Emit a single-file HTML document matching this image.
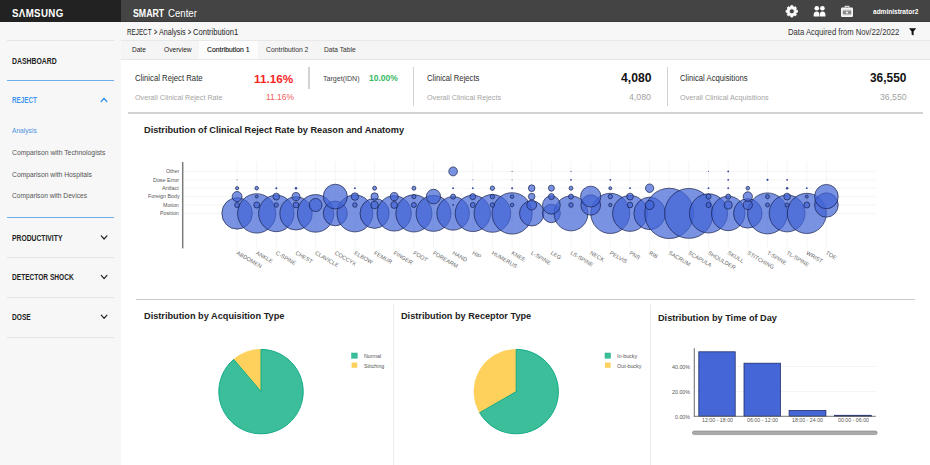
<!DOCTYPE html>
<html><head><meta charset="utf-8"><title>SMART Center</title>
<style>
*{box-sizing:border-box;margin:0;padding:0}
html,body{width:930px;height:465px;overflow:hidden;background:#fff;font-family:"Liberation Sans",sans-serif}
#w{position:relative;width:930px;height:465px;overflow:hidden;background:#fff}
.a{position:absolute}
.t{position:absolute;white-space:pre;line-height:1;transform-origin:0 50%}
svg{position:absolute;left:0;top:0}
svg text{font-family:"Liberation Sans",sans-serif}
</style></head>
<body><div id="w">

<div class="a" style="left:0;top:0;width:121px;height:22.4px;background:#222"></div>
<div class="a" style="left:121px;top:0;width:809px;height:22.4px;background:#444;border-bottom:1px solid #383838"></div>
<div class="a" style="left:0;top:22px;width:121px;height:443px;background:#f7f7f7"></div>
<div class="a" style="left:121px;top:22px;width:809px;height:19px;background:#f7f7f7;border-bottom:1px solid #e8e8e8"></div>
<div class="a" style="left:121px;top:41px;width:809px;height:18.8px;background:#f5f5f5;border-bottom:1px solid #e6e6e6"></div>
<div class="a" style="left:198.6px;top:41.4px;width:59.8px;height:17.4px;background:#fcfcfc"></div>
<div class="a" style="left:7.3px;top:40.2px;width:106.4px;height:1px;background:#e4e4e4"></div>
<div class="a" style="left:7.3px;top:79.9px;width:106.4px;height:1px;background:#6cadec"></div>
<div class="a" style="left:7.3px;top:217.4px;width:106.4px;height:1px;background:#6cadec"></div>
<div class="a" style="left:7.3px;top:257.2px;width:106.4px;height:1px;background:#e4e4e4"></div>
<div class="a" style="left:7.3px;top:297px;width:106.4px;height:1px;background:#e4e4e4"></div>
<div class="a" style="left:7.3px;top:336.5px;width:106.4px;height:1px;background:#e4e4e4"></div>
<div class="a" style="left:308.4px;top:67.4px;width:1.6px;height:21.6px;background:#d2d2d2"></div>
<div class="a" style="left:412.8px;top:67.4px;width:1.6px;height:38.2px;background:#d2d2d2"></div>
<div class="a" style="left:666.8px;top:67.4px;width:1.6px;height:38.2px;background:#d2d2d2"></div>
<div class="a" style="left:128.4px;top:112px;width:794.6px;height:1.7px;background:#d2d2d2"></div>
<div class="a" style="left:136px;top:299px;width:779px;height:1px;background:#cacaca"></div>
<div class="a" style="left:393.2px;top:303.7px;width:1px;height:162px;background:#ececec"></div>
<div class="a" style="left:650.1px;top:303.7px;width:1px;height:162px;background:#ececec"></div>

<svg width="930" height="465" viewBox="0 0 930 465">
<line x1="185" x2="875.6" y1="171.4" y2="171.4" stroke="#f1f1f1" stroke-width="0.7"/>
<line x1="185" x2="875.6" y1="179.8" y2="179.8" stroke="#f1f1f1" stroke-width="0.7"/>
<line x1="185" x2="875.6" y1="188.2" y2="188.2" stroke="#f1f1f1" stroke-width="0.7"/>
<line x1="185" x2="875.6" y1="196.6" y2="196.6" stroke="#f1f1f1" stroke-width="0.7"/>
<line x1="185" x2="875.6" y1="205.0" y2="205.0" stroke="#f1f1f1" stroke-width="0.7"/>
<line x1="185" x2="875.6" y1="213.4" y2="213.4" stroke="#f1f1f1" stroke-width="0.7"/>
<line x1="237.1" x2="237.1" y1="161.6" y2="248.4" stroke="#f1f1f1" stroke-width="0.7"/>
<line x1="256.7" x2="256.7" y1="161.6" y2="248.4" stroke="#f1f1f1" stroke-width="0.7"/>
<line x1="276.3" x2="276.3" y1="161.6" y2="248.4" stroke="#f1f1f1" stroke-width="0.7"/>
<line x1="296.0" x2="296.0" y1="161.6" y2="248.4" stroke="#f1f1f1" stroke-width="0.7"/>
<line x1="315.6" x2="315.6" y1="161.6" y2="248.4" stroke="#f1f1f1" stroke-width="0.7"/>
<line x1="335.3" x2="335.3" y1="161.6" y2="248.4" stroke="#f1f1f1" stroke-width="0.7"/>
<line x1="354.9" x2="354.9" y1="161.6" y2="248.4" stroke="#f1f1f1" stroke-width="0.7"/>
<line x1="374.6" x2="374.6" y1="161.6" y2="248.4" stroke="#f1f1f1" stroke-width="0.7"/>
<line x1="394.2" x2="394.2" y1="161.6" y2="248.4" stroke="#f1f1f1" stroke-width="0.7"/>
<line x1="413.9" x2="413.9" y1="161.6" y2="248.4" stroke="#f1f1f1" stroke-width="0.7"/>
<line x1="433.5" x2="433.5" y1="161.6" y2="248.4" stroke="#f1f1f1" stroke-width="0.7"/>
<line x1="453.1" x2="453.1" y1="161.6" y2="248.4" stroke="#f1f1f1" stroke-width="0.7"/>
<line x1="472.8" x2="472.8" y1="161.6" y2="248.4" stroke="#f1f1f1" stroke-width="0.7"/>
<line x1="492.4" x2="492.4" y1="161.6" y2="248.4" stroke="#f1f1f1" stroke-width="0.7"/>
<line x1="512.1" x2="512.1" y1="161.6" y2="248.4" stroke="#f1f1f1" stroke-width="0.7"/>
<line x1="531.7" x2="531.7" y1="161.6" y2="248.4" stroke="#f1f1f1" stroke-width="0.7"/>
<line x1="551.4" x2="551.4" y1="161.6" y2="248.4" stroke="#f1f1f1" stroke-width="0.7"/>
<line x1="571.0" x2="571.0" y1="161.6" y2="248.4" stroke="#f1f1f1" stroke-width="0.7"/>
<line x1="590.7" x2="590.7" y1="161.6" y2="248.4" stroke="#f1f1f1" stroke-width="0.7"/>
<line x1="610.3" x2="610.3" y1="161.6" y2="248.4" stroke="#f1f1f1" stroke-width="0.7"/>
<line x1="630.0" x2="630.0" y1="161.6" y2="248.4" stroke="#f1f1f1" stroke-width="0.7"/>
<line x1="649.6" x2="649.6" y1="161.6" y2="248.4" stroke="#f1f1f1" stroke-width="0.7"/>
<line x1="669.2" x2="669.2" y1="161.6" y2="248.4" stroke="#f1f1f1" stroke-width="0.7"/>
<line x1="688.9" x2="688.9" y1="161.6" y2="248.4" stroke="#f1f1f1" stroke-width="0.7"/>
<line x1="708.5" x2="708.5" y1="161.6" y2="248.4" stroke="#f1f1f1" stroke-width="0.7"/>
<line x1="728.2" x2="728.2" y1="161.6" y2="248.4" stroke="#f1f1f1" stroke-width="0.7"/>
<line x1="747.8" x2="747.8" y1="161.6" y2="248.4" stroke="#f1f1f1" stroke-width="0.7"/>
<line x1="767.5" x2="767.5" y1="161.6" y2="248.4" stroke="#f1f1f1" stroke-width="0.7"/>
<line x1="787.1" x2="787.1" y1="161.6" y2="248.4" stroke="#f1f1f1" stroke-width="0.7"/>
<line x1="806.8" x2="806.8" y1="161.6" y2="248.4" stroke="#f1f1f1" stroke-width="0.7"/>
<line x1="826.4" x2="826.4" y1="161.6" y2="248.4" stroke="#f1f1f1" stroke-width="0.7"/>
<line x1="182.7" x2="182.7" y1="162" y2="248.4" stroke="#7c7c7c" stroke-width="1.5"/>
<ellipse cx="237.1" cy="213.4" rx="15.27" ry="15.73" fill="rgba(66,100,214,0.70)" stroke="rgba(18,28,70,0.9)" stroke-width="0.75"/>
<ellipse cx="256.7" cy="213.4" rx="19.11" ry="19.69" fill="rgba(66,100,214,0.70)" stroke="rgba(18,28,70,0.9)" stroke-width="0.75"/>
<ellipse cx="276.3" cy="213.4" rx="17.73" ry="18.27" fill="rgba(66,100,214,0.70)" stroke="rgba(18,28,70,0.9)" stroke-width="0.75"/>
<ellipse cx="296.0" cy="213.4" rx="16.15" ry="16.65" fill="rgba(66,100,214,0.70)" stroke="rgba(18,28,70,0.9)" stroke-width="0.75"/>
<ellipse cx="315.6" cy="213.4" rx="18.22" ry="18.78" fill="rgba(66,100,214,0.70)" stroke="rgba(18,28,70,0.9)" stroke-width="0.75"/>
<ellipse cx="335.3" cy="213.4" rx="12.02" ry="12.38" fill="rgba(66,100,214,0.70)" stroke="rgba(18,28,70,0.9)" stroke-width="0.75"/>
<ellipse cx="354.9" cy="213.4" rx="17.93" ry="18.47" fill="rgba(66,100,214,0.70)" stroke="rgba(18,28,70,0.9)" stroke-width="0.75"/>
<ellipse cx="374.6" cy="213.4" rx="14.58" ry="15.02" fill="rgba(66,100,214,0.70)" stroke="rgba(18,28,70,0.9)" stroke-width="0.75"/>
<ellipse cx="394.2" cy="213.4" rx="17.14" ry="17.66" fill="rgba(66,100,214,0.70)" stroke="rgba(18,28,70,0.9)" stroke-width="0.75"/>
<ellipse cx="413.9" cy="213.4" rx="18.03" ry="18.57" fill="rgba(66,100,214,0.70)" stroke="rgba(18,28,70,0.9)" stroke-width="0.75"/>
<ellipse cx="433.5" cy="213.4" rx="17.43" ry="17.97" fill="rgba(66,100,214,0.70)" stroke="rgba(18,28,70,0.9)" stroke-width="0.75"/>
<ellipse cx="453.1" cy="213.4" rx="16.25" ry="16.75" fill="rgba(66,100,214,0.70)" stroke="rgba(18,28,70,0.9)" stroke-width="0.75"/>
<ellipse cx="472.8" cy="213.4" rx="17.63" ry="18.17" fill="rgba(66,100,214,0.70)" stroke="rgba(18,28,70,0.9)" stroke-width="0.75"/>
<ellipse cx="492.4" cy="213.4" rx="18.32" ry="18.88" fill="rgba(66,100,214,0.70)" stroke="rgba(18,28,70,0.9)" stroke-width="0.75"/>
<ellipse cx="512.1" cy="213.4" rx="20.09" ry="20.71" fill="rgba(66,100,214,0.70)" stroke="rgba(18,28,70,0.9)" stroke-width="0.75"/>
<ellipse cx="531.7" cy="213.4" rx="12.21" ry="12.59" fill="rgba(66,100,214,0.70)" stroke="rgba(18,28,70,0.9)" stroke-width="0.75"/>
<ellipse cx="551.4" cy="213.4" rx="8.96" ry="9.24" fill="rgba(66,100,214,0.70)" stroke="rgba(18,28,70,0.9)" stroke-width="0.75"/>
<ellipse cx="571.0" cy="213.4" rx="16.94" ry="17.46" fill="rgba(66,100,214,0.70)" stroke="rgba(18,28,70,0.9)" stroke-width="0.75"/>
<ellipse cx="610.3" cy="213.4" rx="19.50" ry="20.10" fill="rgba(66,100,214,0.70)" stroke="rgba(18,28,70,0.9)" stroke-width="0.75"/>
<ellipse cx="630.0" cy="213.4" rx="17.43" ry="17.97" fill="rgba(66,100,214,0.70)" stroke="rgba(18,28,70,0.9)" stroke-width="0.75"/>
<ellipse cx="649.6" cy="213.4" rx="15.76" ry="16.24" fill="rgba(66,100,214,0.70)" stroke="rgba(18,28,70,0.9)" stroke-width="0.75"/>
<ellipse cx="669.2" cy="213.4" rx="24.43" ry="25.17" fill="rgba(66,100,214,0.70)" stroke="rgba(18,28,70,0.9)" stroke-width="0.75"/>
<ellipse cx="688.9" cy="213.4" rx="24.23" ry="24.97" fill="rgba(66,100,214,0.70)" stroke="rgba(18,28,70,0.9)" stroke-width="0.75"/>
<ellipse cx="708.5" cy="213.4" rx="19.01" ry="19.59" fill="rgba(66,100,214,0.70)" stroke="rgba(18,28,70,0.9)" stroke-width="0.75"/>
<ellipse cx="728.2" cy="213.4" rx="16.75" ry="17.25" fill="rgba(66,100,214,0.70)" stroke="rgba(18,28,70,0.9)" stroke-width="0.75"/>
<ellipse cx="747.8" cy="213.4" rx="14.28" ry="14.72" fill="rgba(66,100,214,0.70)" stroke="rgba(18,28,70,0.9)" stroke-width="0.75"/>
<ellipse cx="767.5" cy="213.4" rx="19.90" ry="20.50" fill="rgba(66,100,214,0.70)" stroke="rgba(18,28,70,0.9)" stroke-width="0.75"/>
<ellipse cx="787.1" cy="213.4" rx="17.93" ry="18.47" fill="rgba(66,100,214,0.70)" stroke="rgba(18,28,70,0.9)" stroke-width="0.75"/>
<ellipse cx="806.8" cy="213.4" rx="19.50" ry="20.10" fill="rgba(66,100,214,0.70)" stroke="rgba(18,28,70,0.9)" stroke-width="0.75"/>
<ellipse cx="237.1" cy="205.0" rx="2.46" ry="2.54" fill="rgba(66,100,214,0.70)" stroke="rgba(18,28,70,0.9)" stroke-width="0.75"/>
<ellipse cx="256.7" cy="205.0" rx="2.96" ry="3.04" fill="rgba(66,100,214,0.70)" stroke="rgba(18,28,70,0.9)" stroke-width="0.75"/>
<ellipse cx="276.3" cy="205.0" rx="2.17" ry="2.23" fill="rgba(66,100,214,0.70)" stroke="rgba(18,28,70,0.9)" stroke-width="0.75"/>
<ellipse cx="296.0" cy="205.0" rx="2.86" ry="2.94" fill="rgba(66,100,214,0.70)" stroke="rgba(18,28,70,0.9)" stroke-width="0.75"/>
<ellipse cx="315.6" cy="205.0" rx="6.40" ry="6.60" fill="rgba(66,100,214,0.70)" stroke="rgba(18,28,70,0.9)" stroke-width="0.75"/>
<ellipse cx="354.9" cy="205.0" rx="2.27" ry="2.33" fill="rgba(66,100,214,0.70)" stroke="rgba(18,28,70,0.9)" stroke-width="0.75"/>
<ellipse cx="374.6" cy="205.0" rx="3.74" ry="3.86" fill="rgba(66,100,214,0.70)" stroke="rgba(18,28,70,0.9)" stroke-width="0.75"/>
<ellipse cx="394.2" cy="205.0" rx="3.35" ry="3.45" fill="rgba(66,100,214,0.70)" stroke="rgba(18,28,70,0.9)" stroke-width="0.75"/>
<ellipse cx="413.9" cy="205.0" rx="2.46" ry="2.54" fill="rgba(66,100,214,0.70)" stroke="rgba(18,28,70,0.9)" stroke-width="0.75"/>
<ellipse cx="453.1" cy="205.0" rx="0.90" ry="0.90" fill="rgba(40,58,150,0.95)"/>
<ellipse cx="472.8" cy="205.0" rx="2.46" ry="2.54" fill="rgba(66,100,214,0.70)" stroke="rgba(18,28,70,0.9)" stroke-width="0.75"/>
<ellipse cx="492.4" cy="205.0" rx="2.17" ry="2.23" fill="rgba(66,100,214,0.70)" stroke="rgba(18,28,70,0.9)" stroke-width="0.75"/>
<ellipse cx="512.1" cy="205.0" rx="1.77" ry="1.83" fill="rgba(66,100,214,0.70)" stroke="rgba(18,28,70,0.9)" stroke-width="0.75"/>
<ellipse cx="531.7" cy="205.0" rx="4.92" ry="5.07" fill="rgba(66,100,214,0.70)" stroke="rgba(18,28,70,0.9)" stroke-width="0.75"/>
<ellipse cx="551.4" cy="205.0" rx="8.87" ry="9.13" fill="rgba(66,100,214,0.70)" stroke="rgba(18,28,70,0.9)" stroke-width="0.75"/>
<ellipse cx="571.0" cy="205.0" rx="2.27" ry="2.33" fill="rgba(66,100,214,0.70)" stroke="rgba(18,28,70,0.9)" stroke-width="0.75"/>
<ellipse cx="590.7" cy="205.0" rx="9.85" ry="10.15" fill="rgba(66,100,214,0.70)" stroke="rgba(18,28,70,0.9)" stroke-width="0.75"/>
<ellipse cx="610.3" cy="205.0" rx="1.67" ry="1.73" fill="rgba(66,100,214,0.70)" stroke="rgba(18,28,70,0.9)" stroke-width="0.75"/>
<ellipse cx="630.0" cy="205.0" rx="2.76" ry="2.84" fill="rgba(66,100,214,0.70)" stroke="rgba(18,28,70,0.9)" stroke-width="0.75"/>
<ellipse cx="649.6" cy="205.0" rx="4.43" ry="4.57" fill="rgba(66,100,214,0.70)" stroke="rgba(18,28,70,0.9)" stroke-width="0.75"/>
<ellipse cx="708.5" cy="205.0" rx="2.46" ry="2.54" fill="rgba(66,100,214,0.70)" stroke="rgba(18,28,70,0.9)" stroke-width="0.75"/>
<ellipse cx="728.2" cy="205.0" rx="3.94" ry="4.06" fill="rgba(66,100,214,0.70)" stroke="rgba(18,28,70,0.9)" stroke-width="0.75"/>
<ellipse cx="747.8" cy="205.0" rx="4.63" ry="4.77" fill="rgba(66,100,214,0.70)" stroke="rgba(18,28,70,0.9)" stroke-width="0.75"/>
<ellipse cx="767.5" cy="205.0" rx="1.97" ry="2.03" fill="rgba(66,100,214,0.70)" stroke="rgba(18,28,70,0.9)" stroke-width="0.75"/>
<ellipse cx="787.1" cy="205.0" rx="1.97" ry="2.03" fill="rgba(66,100,214,0.70)" stroke="rgba(18,28,70,0.9)" stroke-width="0.75"/>
<ellipse cx="806.8" cy="205.0" rx="2.96" ry="3.04" fill="rgba(66,100,214,0.70)" stroke="rgba(18,28,70,0.9)" stroke-width="0.75"/>
<ellipse cx="826.4" cy="205.0" rx="11.82" ry="12.18" fill="rgba(66,100,214,0.70)" stroke="rgba(18,28,70,0.9)" stroke-width="0.75"/>
<ellipse cx="237.1" cy="196.6" rx="4.92" ry="5.07" fill="rgba(66,100,214,0.70)" stroke="rgba(18,28,70,0.9)" stroke-width="0.75"/>
<ellipse cx="256.7" cy="196.6" rx="1.38" ry="1.42" fill="rgba(66,100,214,0.70)" stroke="rgba(18,28,70,0.9)" stroke-width="0.75"/>
<ellipse cx="276.3" cy="196.6" rx="3.35" ry="3.45" fill="rgba(66,100,214,0.70)" stroke="rgba(18,28,70,0.9)" stroke-width="0.75"/>
<ellipse cx="296.0" cy="196.6" rx="3.94" ry="4.06" fill="rgba(66,100,214,0.70)" stroke="rgba(18,28,70,0.9)" stroke-width="0.75"/>
<ellipse cx="335.3" cy="196.6" rx="12.02" ry="12.38" fill="rgba(66,100,214,0.70)" stroke="rgba(18,28,70,0.9)" stroke-width="0.75"/>
<ellipse cx="354.9" cy="196.6" rx="3.64" ry="3.76" fill="rgba(66,100,214,0.70)" stroke="rgba(18,28,70,0.9)" stroke-width="0.75"/>
<ellipse cx="374.6" cy="196.6" rx="3.64" ry="3.76" fill="rgba(66,100,214,0.70)" stroke="rgba(18,28,70,0.9)" stroke-width="0.75"/>
<ellipse cx="394.2" cy="196.6" rx="3.94" ry="4.06" fill="rgba(66,100,214,0.70)" stroke="rgba(18,28,70,0.9)" stroke-width="0.75"/>
<ellipse cx="413.9" cy="196.6" rx="2.07" ry="2.13" fill="rgba(66,100,214,0.70)" stroke="rgba(18,28,70,0.9)" stroke-width="0.75"/>
<ellipse cx="433.5" cy="196.6" rx="7.09" ry="7.31" fill="rgba(66,100,214,0.70)" stroke="rgba(18,28,70,0.9)" stroke-width="0.75"/>
<ellipse cx="453.1" cy="196.6" rx="2.46" ry="2.54" fill="rgba(66,100,214,0.70)" stroke="rgba(18,28,70,0.9)" stroke-width="0.75"/>
<ellipse cx="472.8" cy="196.6" rx="2.96" ry="3.04" fill="rgba(66,100,214,0.70)" stroke="rgba(18,28,70,0.9)" stroke-width="0.75"/>
<ellipse cx="492.4" cy="196.6" rx="2.17" ry="2.23" fill="rgba(66,100,214,0.70)" stroke="rgba(18,28,70,0.9)" stroke-width="0.75"/>
<ellipse cx="512.1" cy="196.6" rx="1.77" ry="1.83" fill="rgba(66,100,214,0.70)" stroke="rgba(18,28,70,0.9)" stroke-width="0.75"/>
<ellipse cx="531.7" cy="196.6" rx="3.25" ry="3.35" fill="rgba(66,100,214,0.70)" stroke="rgba(18,28,70,0.9)" stroke-width="0.75"/>
<ellipse cx="551.4" cy="196.6" rx="2.96" ry="3.04" fill="rgba(66,100,214,0.70)" stroke="rgba(18,28,70,0.9)" stroke-width="0.75"/>
<ellipse cx="571.0" cy="196.6" rx="2.46" ry="2.54" fill="rgba(66,100,214,0.70)" stroke="rgba(18,28,70,0.9)" stroke-width="0.75"/>
<ellipse cx="590.7" cy="196.6" rx="10.15" ry="10.45" fill="rgba(66,100,214,0.70)" stroke="rgba(18,28,70,0.9)" stroke-width="0.75"/>
<ellipse cx="610.3" cy="196.6" rx="2.17" ry="2.23" fill="rgba(66,100,214,0.70)" stroke="rgba(18,28,70,0.9)" stroke-width="0.75"/>
<ellipse cx="630.0" cy="196.6" rx="3.35" ry="3.45" fill="rgba(66,100,214,0.70)" stroke="rgba(18,28,70,0.9)" stroke-width="0.75"/>
<ellipse cx="708.5" cy="196.6" rx="2.46" ry="2.54" fill="rgba(66,100,214,0.70)" stroke="rgba(18,28,70,0.9)" stroke-width="0.75"/>
<ellipse cx="728.2" cy="196.6" rx="2.46" ry="2.54" fill="rgba(66,100,214,0.70)" stroke="rgba(18,28,70,0.9)" stroke-width="0.75"/>
<ellipse cx="747.8" cy="196.6" rx="4.63" ry="4.77" fill="rgba(66,100,214,0.70)" stroke="rgba(18,28,70,0.9)" stroke-width="0.75"/>
<ellipse cx="767.5" cy="196.6" rx="1.97" ry="2.03" fill="rgba(66,100,214,0.70)" stroke="rgba(18,28,70,0.9)" stroke-width="0.75"/>
<ellipse cx="787.1" cy="196.6" rx="3.35" ry="3.45" fill="rgba(66,100,214,0.70)" stroke="rgba(18,28,70,0.9)" stroke-width="0.75"/>
<ellipse cx="806.8" cy="196.6" rx="1.48" ry="1.52" fill="rgba(66,100,214,0.70)" stroke="rgba(18,28,70,0.9)" stroke-width="0.75"/>
<ellipse cx="826.4" cy="196.6" rx="11.82" ry="12.18" fill="rgba(66,100,214,0.70)" stroke="rgba(18,28,70,0.9)" stroke-width="0.75"/>
<ellipse cx="237.1" cy="188.2" rx="1.58" ry="1.62" fill="rgba(66,100,214,0.70)" stroke="rgba(18,28,70,0.9)" stroke-width="0.75"/>
<ellipse cx="256.7" cy="188.2" rx="1.77" ry="1.83" fill="rgba(66,100,214,0.70)" stroke="rgba(18,28,70,0.9)" stroke-width="0.75"/>
<ellipse cx="276.3" cy="188.2" rx="1.00" ry="1.00" fill="rgba(40,58,150,0.95)"/>
<ellipse cx="296.0" cy="188.2" rx="1.20" ry="1.20" fill="rgba(40,58,150,0.95)"/>
<ellipse cx="354.9" cy="188.2" rx="0.90" ry="0.90" fill="rgba(40,58,150,0.95)"/>
<ellipse cx="374.6" cy="188.2" rx="1.97" ry="2.03" fill="rgba(66,100,214,0.70)" stroke="rgba(18,28,70,0.9)" stroke-width="0.75"/>
<ellipse cx="413.9" cy="188.2" rx="1.97" ry="2.03" fill="rgba(66,100,214,0.70)" stroke="rgba(18,28,70,0.9)" stroke-width="0.75"/>
<ellipse cx="453.1" cy="188.2" rx="0.90" ry="0.90" fill="rgba(40,58,150,0.95)"/>
<ellipse cx="472.8" cy="188.2" rx="0.90" ry="0.90" fill="rgba(40,58,150,0.95)"/>
<ellipse cx="492.4" cy="188.2" rx="2.17" ry="2.23" fill="rgba(66,100,214,0.70)" stroke="rgba(18,28,70,0.9)" stroke-width="0.75"/>
<ellipse cx="512.1" cy="188.2" rx="1.00" ry="1.00" fill="rgba(40,58,150,0.95)"/>
<ellipse cx="531.7" cy="188.2" rx="3.25" ry="3.35" fill="rgba(66,100,214,0.70)" stroke="rgba(18,28,70,0.9)" stroke-width="0.75"/>
<ellipse cx="551.4" cy="188.2" rx="2.96" ry="3.04" fill="rgba(66,100,214,0.70)" stroke="rgba(18,28,70,0.9)" stroke-width="0.75"/>
<ellipse cx="571.0" cy="188.2" rx="1.97" ry="2.03" fill="rgba(66,100,214,0.70)" stroke="rgba(18,28,70,0.9)" stroke-width="0.75"/>
<ellipse cx="610.3" cy="188.2" rx="1.48" ry="1.52" fill="rgba(66,100,214,0.70)" stroke="rgba(18,28,70,0.9)" stroke-width="0.75"/>
<ellipse cx="630.0" cy="188.2" rx="0.90" ry="0.90" fill="rgba(40,58,150,0.95)"/>
<ellipse cx="649.6" cy="188.2" rx="4.14" ry="4.26" fill="rgba(66,100,214,0.70)" stroke="rgba(18,28,70,0.9)" stroke-width="0.75"/>
<ellipse cx="708.5" cy="188.2" rx="0.90" ry="0.90" fill="rgba(40,58,150,0.95)"/>
<ellipse cx="728.2" cy="188.2" rx="0.90" ry="0.90" fill="rgba(40,58,150,0.95)"/>
<ellipse cx="747.8" cy="188.2" rx="1.77" ry="1.83" fill="rgba(66,100,214,0.70)" stroke="rgba(18,28,70,0.9)" stroke-width="0.75"/>
<ellipse cx="787.1" cy="188.2" rx="1.20" ry="1.20" fill="rgba(40,58,150,0.95)"/>
<ellipse cx="806.8" cy="188.2" rx="0.90" ry="0.90" fill="rgba(40,58,150,0.95)"/>
<ellipse cx="237.1" cy="179.8" rx="0.55" ry="0.55" fill="rgba(40,58,150,0.75)"/>
<ellipse cx="472.8" cy="179.8" rx="0.55" ry="0.55" fill="rgba(40,58,150,0.75)"/>
<ellipse cx="512.1" cy="179.8" rx="0.55" ry="0.55" fill="rgba(40,58,150,0.75)"/>
<ellipse cx="571.0" cy="179.8" rx="0.90" ry="0.90" fill="rgba(40,58,150,0.95)"/>
<ellipse cx="610.3" cy="179.8" rx="0.90" ry="0.90" fill="rgba(40,58,150,0.95)"/>
<ellipse cx="728.2" cy="179.8" rx="0.90" ry="0.90" fill="rgba(40,58,150,0.95)"/>
<ellipse cx="767.5" cy="179.8" rx="1.10" ry="1.10" fill="rgba(40,58,150,0.95)"/>
<ellipse cx="787.1" cy="179.8" rx="0.90" ry="0.90" fill="rgba(40,58,150,0.95)"/>
<ellipse cx="453.1" cy="171.4" rx="4.33" ry="4.47" fill="rgba(66,100,214,0.70)" stroke="rgba(18,28,70,0.9)" stroke-width="0.75"/>
<ellipse cx="512.1" cy="171.4" rx="0.55" ry="0.55" fill="rgba(40,58,150,0.75)"/>
<ellipse cx="571.0" cy="171.4" rx="0.55" ry="0.55" fill="rgba(40,58,150,0.75)"/>
<ellipse cx="708.5" cy="171.4" rx="0.55" ry="0.55" fill="rgba(40,58,150,0.75)"/>
<ellipse cx="728.2" cy="171.4" rx="0.90" ry="0.90" fill="rgba(40,58,150,0.95)"/>
<text x="0" y="0" transform="translate(236.0,254.0) rotate(30.5)" font-size="5.6" fill="#666">ABDOMEN</text>
<text x="0" y="0" transform="translate(255.6,254.0) rotate(30.5)" font-size="5.6" fill="#666">ANKLE</text>
<text x="0" y="0" transform="translate(275.2,254.0) rotate(30.5)" font-size="5.6" fill="#666">C-SPINE</text>
<text x="0" y="0" transform="translate(294.9,254.0) rotate(30.5)" font-size="5.6" fill="#666">CHEST</text>
<text x="0" y="0" transform="translate(314.5,254.0) rotate(30.5)" font-size="5.6" fill="#666">CLAVICLE</text>
<text x="0" y="0" transform="translate(334.2,254.0) rotate(30.5)" font-size="5.6" fill="#666">COCCYX</text>
<text x="0" y="0" transform="translate(353.8,254.0) rotate(30.5)" font-size="5.6" fill="#666">ELBOW</text>
<text x="0" y="0" transform="translate(373.5,254.0) rotate(30.5)" font-size="5.6" fill="#666">FEMUR</text>
<text x="0" y="0" transform="translate(393.1,254.0) rotate(30.5)" font-size="5.6" fill="#666">FINGER</text>
<text x="0" y="0" transform="translate(412.8,254.0) rotate(30.5)" font-size="5.6" fill="#666">FOOT</text>
<text x="0" y="0" transform="translate(432.4,254.0) rotate(30.5)" font-size="5.6" fill="#666">FOREARM</text>
<text x="0" y="0" transform="translate(452.0,254.0) rotate(30.5)" font-size="5.6" fill="#666">HAND</text>
<text x="0" y="0" transform="translate(471.7,254.0) rotate(30.5)" font-size="5.6" fill="#666">HIP</text>
<text x="0" y="0" transform="translate(491.3,254.0) rotate(30.5)" font-size="5.6" fill="#666">HUMERUS</text>
<text x="0" y="0" transform="translate(511.0,254.0) rotate(30.5)" font-size="5.6" fill="#666">KNEE</text>
<text x="0" y="0" transform="translate(530.6,254.0) rotate(30.5)" font-size="5.6" fill="#666">L-SPINE</text>
<text x="0" y="0" transform="translate(550.3,254.0) rotate(30.5)" font-size="5.6" fill="#666">LEG</text>
<text x="0" y="0" transform="translate(569.9,254.0) rotate(30.5)" font-size="5.6" fill="#666">LS-SPINE</text>
<text x="0" y="0" transform="translate(589.6,254.0) rotate(30.5)" font-size="5.6" fill="#666">NECK</text>
<text x="0" y="0" transform="translate(609.2,254.0) rotate(30.5)" font-size="5.6" fill="#666">PELVIS</text>
<text x="0" y="0" transform="translate(628.9,254.0) rotate(30.5)" font-size="5.6" fill="#666">PNS</text>
<text x="0" y="0" transform="translate(648.5,254.0) rotate(30.5)" font-size="5.6" fill="#666">RIB</text>
<text x="0" y="0" transform="translate(668.1,254.0) rotate(30.5)" font-size="5.6" fill="#666">SACRUM</text>
<text x="0" y="0" transform="translate(687.8,254.0) rotate(30.5)" font-size="5.6" fill="#666">SCAPULA</text>
<text x="0" y="0" transform="translate(707.4,254.0) rotate(30.5)" font-size="5.6" fill="#666">SHOULDER</text>
<text x="0" y="0" transform="translate(727.1,254.0) rotate(30.5)" font-size="5.6" fill="#666">SKULL</text>
<text x="0" y="0" transform="translate(746.7,254.0) rotate(30.5)" font-size="5.6" fill="#666">STITCHING</text>
<text x="0" y="0" transform="translate(766.4,254.0) rotate(30.5)" font-size="5.6" fill="#666">T-SPINE</text>
<text x="0" y="0" transform="translate(786.0,254.0) rotate(30.5)" font-size="5.6" fill="#666">TL-SPINE</text>
<text x="0" y="0" transform="translate(805.7,254.0) rotate(30.5)" font-size="5.6" fill="#666">WRIST</text>
<text x="0" y="0" transform="translate(825.3,254.0) rotate(30.5)" font-size="5.6" fill="#666">TOE</text>
<path d="M261,391.6 L233.71,359.42 A42.2,42.2 0 0 1 261,349.40000000000003 Z" fill="#fed05c" stroke="#fed05c" stroke-width="0.9"/><path d="M261,391.6 L261,349.40000000000003 A42.2,42.2 0 1 1 233.71,359.42 Z" fill="#3cbe9b" stroke="#14ab87" stroke-width="1" stroke-linejoin="round"/>
<path d="M516.2,391.6 L479.65,412.70 A42.2,42.2 0 0 1 516.2,349.40000000000003 Z" fill="#fed05c" stroke="#fed05c" stroke-width="0.9"/><path d="M516.2,391.6 L516.2,349.40000000000003 A42.2,42.2 0 1 1 479.65,412.70 Z" fill="#3cbe9b" stroke="#14ab87" stroke-width="1" stroke-linejoin="round"/>
<rect x="351.6" y="353" width="5.6" height="5.2" fill="#3cbe9b" stroke="#22b08f" stroke-width="0.5"/>
<rect x="351.6" y="362.6" width="5.6" height="5.2" fill="#fed05c"/>
<rect x="605" y="353" width="5.6" height="5.2" fill="#3cbe9b" stroke="#22b08f" stroke-width="0.5"/>
<rect x="605" y="362.6" width="5.6" height="5.2" fill="#fed05c"/>
<line x1="694.3" x2="875.8" y1="366.5" y2="366.5" stroke="#f1f1f1" stroke-width="0.7"/>
<line x1="694.3" x2="875.8" y1="391.5" y2="391.5" stroke="#f1f1f1" stroke-width="0.7"/>
<rect x="698.8" y="351.8" width="36.4" height="64.4" fill="#4466d6" stroke="#1e2d6b" stroke-width="0.8"/>
<rect x="744" y="363.2" width="36.4" height="53.0" fill="#4466d6" stroke="#1e2d6b" stroke-width="0.8"/>
<rect x="789.1" y="410.5" width="36.8" height="5.7" fill="#4466d6" stroke="#1e2d6b" stroke-width="0.8"/>
<rect x="834.6" y="415.3" width="36.7" height="0.9" fill="#4466d6" stroke="#1e2d6b" stroke-width="0.8"/>
<line x1="694.3" x2="694.3" y1="348.2" y2="416.6" stroke="#777" stroke-width="1.1"/>
<line x1="693.8" x2="875.8" y1="416.3" y2="416.3" stroke="#666" stroke-width="0.9"/>
<rect x="692.4" y="431" width="184.8" height="3.6" rx="1.8" fill="#aaa" stroke="#808080" stroke-width="0.6"/>
<path d="M101.2,101.5 L104,98.30000000000001 L106.8,101.5" fill="none" stroke="#2b8fe8" stroke-width="1.2" stroke-linecap="round" stroke-linejoin="round"/>
<path d="M101.3,235.8 L104.1,239.0 L106.89999999999999,235.8" fill="none" stroke="#222" stroke-width="1.2" stroke-linecap="round" stroke-linejoin="round"/>
<path d="M101.3,275.4 L104.1,278.6 L106.89999999999999,275.4" fill="none" stroke="#222" stroke-width="1.2" stroke-linecap="round" stroke-linejoin="round"/>
<path d="M101.3,315.09999999999997 L104.1,318.3 L106.89999999999999,315.09999999999997" fill="none" stroke="#222" stroke-width="1.2" stroke-linecap="round" stroke-linejoin="round"/>
<path d="M909,28.2 H916.2 L913.6,31.6 V35.6 L911.6,34.4 V31.6 Z" fill="#111"/>
<path d="M790.89,5.57 L792.71,5.57 L792.90,6.73 L794.26,7.29 L795.21,6.61 L796.49,7.89 L795.81,8.84 L796.37,10.20 L797.53,10.39 L797.53,12.21 L796.37,12.40 L795.81,13.76 L796.49,14.71 L795.21,15.99 L794.26,15.31 L792.90,15.87 L792.71,17.03 L790.89,17.03 L790.70,15.87 L789.34,15.31 L788.39,15.99 L787.11,14.71 L787.79,13.76 L787.23,12.40 L786.07,12.21 L786.07,10.39 L787.23,10.20 L787.79,8.84 L787.11,7.89 L788.39,6.61 L789.34,7.29 L790.70,6.73 Z M794.3,11.3 A2.5,2.5 0 1 0 789.3,11.3 A2.5,2.5 0 1 0 794.3,11.3 Z" fill="#fff" fill-rule="evenodd" stroke="#fff" stroke-width="0.8" stroke-linejoin="round"/>
<circle cx="816.8" cy="8.3" r="2.3" fill="#fff"/><circle cx="822.4" cy="8.3" r="2.3" fill="#fff"/>
<path d="M813.7,16.6 V14.4 Q813.9,11.5 816.8,11.5 Q819.3,11.5 819.4,14.4 V16.6 Z" fill="#fff"/>
<path d="M819.9,16.6 V14.4 Q820,11.5 822.4,11.5 Q825.2,11.5 825.4,14.4 V16.6 Z" fill="#fff"/>
<rect x="841" y="7.6" width="12" height="9.4" rx="1.2" fill="#f4f4f4"/>
<path d="M845,7.6 V6.3 H849 V7.6" fill="none" stroke="#f4f4f4" stroke-width="1"/>
<rect x="842.8" y="9.6" width="8.4" height="5.6" fill="#c4c4c4"/><rect x="842.8" y="10.8" width="8.4" height="3.2" fill="#8a8a8a"/><circle cx="847" cy="12.4" r="1.0" fill="#fff"/>
</svg>
<div class="t" style="left:11.8px;top:7.99px;font-size:11px;font-weight:bold;color:#fff;transform:scaleX(0.8832);letter-spacing:0.4px;">SΛMSUNG</div>
<div class="t" style="left:133.3px;top:7.99px;font-size:11px;font-weight:bold;color:#fff;transform:scaleX(0.7978);">SMART</div>
<div class="t" style="left:167.9px;top:7.99px;font-size:11px;font-weight:normal;color:#fff;transform:scaleX(0.8749);">Center</div>
<div class="t" style="left:872.5px;top:8.07px;font-size:7px;font-weight:bold;color:#fff;transform:scaleX(0.9316);">administrator2</div>
<div class="t" style="left:12.3px;top:56.88px;font-size:9px;font-weight:bold;color:#222;transform:scaleX(0.7641);">DASHBOARD</div>
<div class="t" style="left:12.3px;top:96.18px;font-size:9px;font-weight:bold;color:#3f96f3;transform:scaleX(0.7039);">REJECT</div>
<div class="t" style="left:12.3px;top:127.13px;font-size:8px;font-weight:normal;color:#4a90e2;transform:scaleX(0.8289);">Analysis</div>
<div class="t" style="left:12.0px;top:148.73px;font-size:8px;font-weight:normal;color:#555;transform:scaleX(0.8471);">Comparison with Technologists</div>
<div class="t" style="left:12.0px;top:171.03px;font-size:8px;font-weight:normal;color:#555;transform:scaleX(0.8447);">Comparison with Hospitals</div>
<div class="t" style="left:12.0px;top:192.43px;font-size:8px;font-weight:normal;color:#555;transform:scaleX(0.8309);">Comparison with Devices</div>
<div class="t" style="left:12.3px;top:233.58px;font-size:9px;font-weight:bold;color:#222;transform:scaleX(0.7521);">PRODUCTIVITY</div>
<div class="t" style="left:12.3px;top:273.28px;font-size:9px;font-weight:bold;color:#222;transform:scaleX(0.7315);">DETECTOR SHOCK</div>
<div class="t" style="left:12.3px;top:312.88px;font-size:9px;font-weight:bold;color:#222;transform:scaleX(0.7329);">DOSE</div>
<div class="t" style="left:127.1px;top:27.68px;font-size:9px;font-weight:normal;color:#222;transform:scaleX(0.6997);">REJECT</div>
<div class="t" style="left:153.9px;top:27.68px;font-size:9px;font-weight:normal;color:#222;transform:scaleX(0.5887);-webkit-text-stroke:0.15px #222;">&gt;</div>
<div class="t" style="left:158.7px;top:27.68px;font-size:9px;font-weight:normal;color:#222;transform:scaleX(0.7937);">Analysis</div>
<div class="t" style="left:187.9px;top:27.68px;font-size:9px;font-weight:normal;color:#222;transform:scaleX(0.5887);-webkit-text-stroke:0.15px #222;">&gt;</div>
<div class="t" style="left:192.9px;top:27.68px;font-size:9px;font-weight:normal;color:#222;transform:scaleX(0.8441);">Contribution1</div>
<div class="t" style="left:788.4px;top:28.00px;font-size:8.5px;font-weight:normal;color:#333;transform:scaleX(0.9017);">Data Acquired from Nov/22/2022</div>
<div class="t" style="left:131.6px;top:45.85px;font-size:7.5px;font-weight:normal;color:#222;transform:scaleX(0.8710);">Date</div>
<div class="t" style="left:164.0px;top:45.85px;font-size:7.5px;font-weight:normal;color:#222;transform:scaleX(0.8828);">Overview</div>
<div class="t" style="left:207.2px;top:45.85px;font-size:7.5px;font-weight:normal;color:#111;transform:scaleX(0.9121);-webkit-text-stroke:0.12px #111;">Contribution 1</div>
<div class="t" style="left:266.0px;top:45.85px;font-size:7.5px;font-weight:normal;color:#333;transform:scaleX(0.9079);">Contribution 2</div>
<div class="t" style="left:324.4px;top:45.85px;font-size:7.5px;font-weight:normal;color:#333;transform:scaleX(0.8843);">Data Table</div>
<div class="t" style="left:135.4px;top:74.30px;font-size:8.5px;font-weight:normal;color:#2c2c2c;transform:scaleX(0.9114);">Clinical Reject Rate</div>
<div class="t" style="left:253.9px;top:72.50px;font-size:11.7px;font-weight:bold;color:#f8231e;transform:scaleX(1.0051);">11.16%</div>
<div class="t" style="left:135.4px;top:93.73px;font-size:8px;font-weight:normal;color:#a4a4a4;transform:scaleX(0.8996);">Overall Clinical Reject Rate</div>
<div class="t" style="left:266.0px;top:93.08px;font-size:9px;font-weight:normal;color:#f0605a;transform:scaleX(0.9377);">11.16%</div>
<div class="t" style="left:323.4px;top:74.73px;font-size:8px;font-weight:normal;color:#444;transform:scaleX(0.8853);">Target(IDN)</div>
<div class="t" style="left:368.6px;top:74.01px;font-size:9.2px;font-weight:bold;color:#35b85f;transform:scaleX(0.9239);">10.00%</div>
<div class="t" style="left:427.0px;top:74.30px;font-size:8.5px;font-weight:normal;color:#2c2c2c;transform:scaleX(0.9017);">Clinical Rejects</div>
<div class="t" style="left:427.0px;top:93.73px;font-size:8px;font-weight:normal;color:#a4a4a4;transform:scaleX(0.8997);">Overall Clinical Rejects</div>
<div class="t" style="left:621.0px;top:72.34px;font-size:12px;font-weight:bold;color:#111;transform:scaleX(1.0123);">4,080</div>
<div class="t" style="left:629.4px;top:93.08px;font-size:9px;font-weight:normal;color:#a2a2a2;transform:scaleX(0.9720);">4,080</div>
<div class="t" style="left:680.4px;top:74.30px;font-size:8.5px;font-weight:normal;color:#2c2c2c;transform:scaleX(0.9055);">Clinical Acquisitions</div>
<div class="t" style="left:680.4px;top:93.73px;font-size:8px;font-weight:normal;color:#a4a4a4;transform:scaleX(0.9057);">Overall Clinical Acquisitions</div>
<div class="t" style="left:870.0px;top:72.34px;font-size:12px;font-weight:bold;color:#111;transform:scaleX(0.9917);">36,550</div>
<div class="t" style="left:880.0px;top:93.08px;font-size:9px;font-weight:normal;color:#a2a2a2;transform:scaleX(0.9662);">36,550</div>
<div class="t" style="left:144.0px;top:125.71px;font-size:9.2px;font-weight:bold;color:#222;transform:scaleX(0.9999);">Distribution of Clinical Reject Rate by Reason and Anatomy</div>
<div class="t" style="left:144.0px;top:312.31px;font-size:9.2px;font-weight:bold;color:#222;transform:scaleX(1.0002);">Distribution by Acquisition Type</div>
<div class="t" style="left:401.4px;top:312.31px;font-size:9.2px;font-weight:bold;color:#222;transform:scaleX(0.9976);">Distribution by Receptor Type</div>
<div class="t" style="left:658.1px;top:314.41px;font-size:9.2px;font-weight:bold;color:#222;transform:scaleX(0.9968);">Distribution by Time of Day</div>
<div class="t" style="left:166.0px;top:169.24px;font-size:5.5px;font-weight:normal;color:#555;transform:scaleX(0.9589);">Other</div>
<div class="t" style="left:153.2px;top:177.64px;font-size:5.5px;font-weight:normal;color:#555;transform:scaleX(0.9777);">Dose Error</div>
<div class="t" style="left:162.4px;top:186.04px;font-size:5.5px;font-weight:normal;color:#555;transform:scaleX(0.9810);">Artifact</div>
<div class="t" style="left:147.6px;top:194.44px;font-size:5.5px;font-weight:normal;color:#555;transform:scaleX(0.9658);">Foreign Body</div>
<div class="t" style="left:163.4px;top:202.84px;font-size:5.5px;font-weight:normal;color:#555;transform:scaleX(0.9567);">Motion</div>
<div class="t" style="left:160.4px;top:211.24px;font-size:5.5px;font-weight:normal;color:#555;transform:scaleX(0.9603);">Position</div>
<div class="t" style="left:364.4px;top:353.76px;font-size:5.6px;font-weight:normal;color:#555;transform:scaleX(0.9539);">Normal</div>
<div class="t" style="left:364.4px;top:363.76px;font-size:5.6px;font-weight:normal;color:#555;transform:scaleX(0.9456);">Stitching</div>
<div class="t" style="left:617.3px;top:353.76px;font-size:5.6px;font-weight:normal;color:#555;transform:scaleX(0.9508);">In-bucky</div>
<div class="t" style="left:617.3px;top:363.76px;font-size:5.6px;font-weight:normal;color:#555;transform:scaleX(0.9569);">Out-bucky</div>
<div class="t" style="left:671.7px;top:365.04px;font-size:5.5px;font-weight:normal;color:#555;transform:scaleX(0.9648);">40.00%</div>
<div class="t" style="left:671.7px;top:390.04px;font-size:5.5px;font-weight:normal;color:#555;transform:scaleX(0.9648);">20.00%</div>
<div class="t" style="left:674.7px;top:414.74px;font-size:5.5px;font-weight:normal;color:#555;transform:scaleX(0.9610);">0.00%</div>
<div class="t" style="left:701.5px;top:418.34px;font-size:5.5px;font-weight:normal;color:#555;transform:scaleX(0.9561);">12:00 - 18:00</div>
<div class="t" style="left:746.7px;top:418.34px;font-size:5.5px;font-weight:normal;color:#555;transform:scaleX(0.9561);">06:00 - 12:00</div>
<div class="t" style="left:792.0px;top:418.34px;font-size:5.5px;font-weight:normal;color:#555;transform:scaleX(0.9561);">18:00 - 24:00</div>
<div class="t" style="left:837.5px;top:418.34px;font-size:5.5px;font-weight:normal;color:#555;transform:scaleX(0.9561);">00:00 - 06:00</div>
</div></body></html>
